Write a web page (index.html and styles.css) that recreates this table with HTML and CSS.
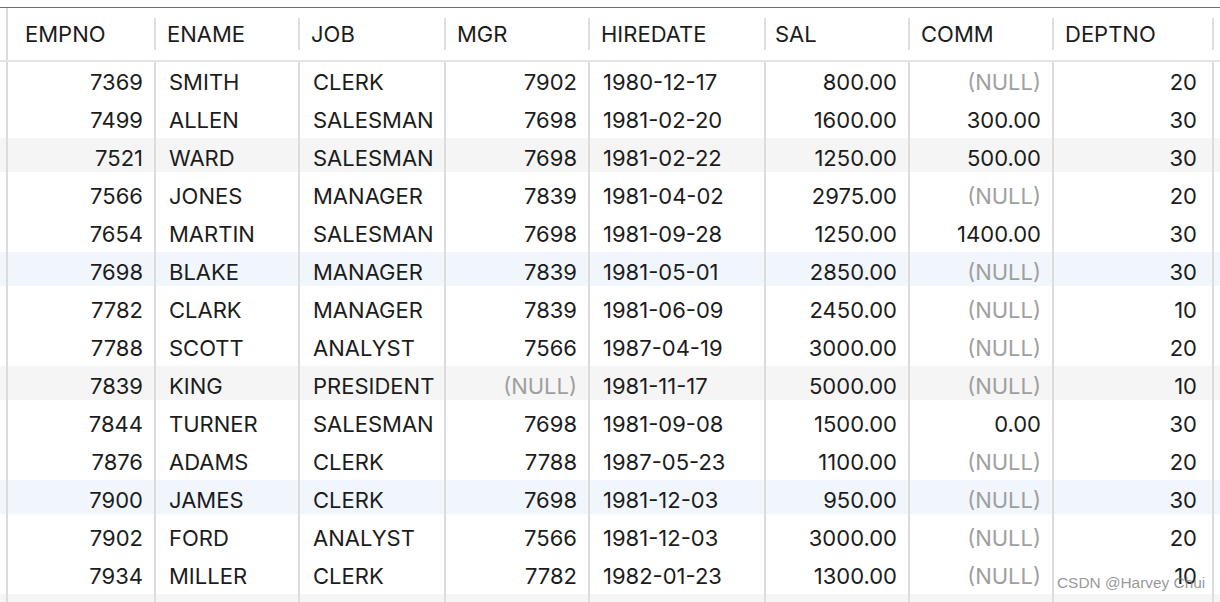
FILE: index.html
```html
<!DOCTYPE html>
<html>
<head>
<meta charset="utf-8">
<link rel="stylesheet" href="styles.css">
</head>
<body>
<div class="topbar"></div>
<div class="grid">
  <div class="row head">
    <div class="pad"></div>
    <div class="hc first">EMPNO</div>
    <div class="hc">ENAME</div>
    <div class="hc">JOB</div>
    <div class="hc">MGR</div>
    <div class="hc">HIREDATE</div>
    <div class="hc sal">SAL</div>
    <div class="hc">COMM</div>
    <div class="hc">DEPTNO</div>
    <div class="hc fill"></div>
  </div>
  <div class="row"><div class="pad"></div><div class="c r">7369</div><div class="c">SMITH</div><div class="c">CLERK</div><div class="c r">7902</div><div class="c">1980-12-17</div><div class="c r">800.00</div><div class="c r null">(NULL)</div><div class="c r last">20</div><div class="c fill"></div></div>
  <div class="row"><div class="pad"></div><div class="c r">7499</div><div class="c">ALLEN</div><div class="c">SALESMAN</div><div class="c r">7698</div><div class="c">1981-02-20</div><div class="c r">1600.00</div><div class="c r">300.00</div><div class="c r last">30</div><div class="c fill"></div></div>
  <div class="row gray"><div class="pad"></div><div class="c r">7521</div><div class="c">WARD</div><div class="c">SALESMAN</div><div class="c r">7698</div><div class="c">1981-02-22</div><div class="c r">1250.00</div><div class="c r">500.00</div><div class="c r last">30</div><div class="c fill"></div></div>
  <div class="row"><div class="pad"></div><div class="c r">7566</div><div class="c">JONES</div><div class="c">MANAGER</div><div class="c r">7839</div><div class="c">1981-04-02</div><div class="c r">2975.00</div><div class="c r null">(NULL)</div><div class="c r last">20</div><div class="c fill"></div></div>
  <div class="row"><div class="pad"></div><div class="c r">7654</div><div class="c">MARTIN</div><div class="c">SALESMAN</div><div class="c r">7698</div><div class="c">1981-09-28</div><div class="c r">1250.00</div><div class="c r">1400.00</div><div class="c r last">30</div><div class="c fill"></div></div>
  <div class="row blue"><div class="pad"></div><div class="c r">7698</div><div class="c">BLAKE</div><div class="c">MANAGER</div><div class="c r">7839</div><div class="c">1981-05-01</div><div class="c r">2850.00</div><div class="c r null">(NULL)</div><div class="c r last">30</div><div class="c fill"></div></div>
  <div class="row"><div class="pad"></div><div class="c r">7782</div><div class="c">CLARK</div><div class="c">MANAGER</div><div class="c r">7839</div><div class="c">1981-06-09</div><div class="c r">2450.00</div><div class="c r null">(NULL)</div><div class="c r last">10</div><div class="c fill"></div></div>
  <div class="row"><div class="pad"></div><div class="c r">7788</div><div class="c">SCOTT</div><div class="c">ANALYST</div><div class="c r">7566</div><div class="c">1987-04-19</div><div class="c r">3000.00</div><div class="c r null">(NULL)</div><div class="c r last">20</div><div class="c fill"></div></div>
  <div class="row gray"><div class="pad"></div><div class="c r">7839</div><div class="c">KING</div><div class="c">PRESIDENT</div><div class="c r null">(NULL)</div><div class="c">1981-11-17</div><div class="c r">5000.00</div><div class="c r null">(NULL)</div><div class="c r last">10</div><div class="c fill"></div></div>
  <div class="row"><div class="pad"></div><div class="c r">7844</div><div class="c">TURNER</div><div class="c">SALESMAN</div><div class="c r">7698</div><div class="c">1981-09-08</div><div class="c r">1500.00</div><div class="c r">0.00</div><div class="c r last">30</div><div class="c fill"></div></div>
  <div class="row"><div class="pad"></div><div class="c r">7876</div><div class="c">ADAMS</div><div class="c">CLERK</div><div class="c r">7788</div><div class="c">1987-05-23</div><div class="c r">1100.00</div><div class="c r null">(NULL)</div><div class="c r last">20</div><div class="c fill"></div></div>
  <div class="row blue"><div class="pad"></div><div class="c r">7900</div><div class="c">JAMES</div><div class="c">CLERK</div><div class="c r">7698</div><div class="c">1981-12-03</div><div class="c r">950.00</div><div class="c r null">(NULL)</div><div class="c r last">30</div><div class="c fill"></div></div>
  <div class="row"><div class="pad"></div><div class="c r">7902</div><div class="c">FORD</div><div class="c">ANALYST</div><div class="c r">7566</div><div class="c">1981-12-03</div><div class="c r">3000.00</div><div class="c r null">(NULL)</div><div class="c r last">20</div><div class="c fill"></div></div>
  <div class="row"><div class="pad"></div><div class="c r">7934</div><div class="c">MILLER</div><div class="c">CLERK</div><div class="c r">7782</div><div class="c">1982-01-23</div><div class="c r">1300.00</div><div class="c r null">(NULL)</div><div class="c r last">10</div><div class="c fill"></div></div>
  <div class="row gray"><div class="pad"></div><div class="c r"></div><div class="c"></div><div class="c"></div><div class="c r"></div><div class="c"></div><div class="c r"></div><div class="c r"></div><div class="c r last"></div><div class="c fill"></div></div>
</div>
<div class="watermark">CSDN @Harvey Chui</div>
</body>
</html>
```

FILE: styles.css
```css
html, body {
  margin: 0;
  padding: 0;
  width: 1220px;
  height: 602px;
  overflow: hidden;
  background: #ffffff;
}
body {
  position: relative;
  font-family: "Inter", "Liberation Sans", sans-serif;
  font-size: 22px;
  color: #1c1c1c;
}
.topbar {
  height: 7px;
  border-bottom: 1px solid #707070;
}
.row {
  display: grid;
  grid-template-columns: 6px 148px 144px 146px 144px 176px 144px 144px 160px 1fr;
  height: 38px;
}
.row.gray {
  background: linear-gradient(to bottom, #f5f5f5 0, #f5f5f5 34px, transparent 34px);
}
.row.blue {
  background: linear-gradient(to bottom, #f1f6fd 0, #f1f6fd 34px, transparent 34px);
}
.row.head {
  height: 52px;
  border-bottom: 2px solid #e3e3e3;
}
.hc {
  position: relative;
  line-height: 52px;
  padding-left: 13px;
  white-space: nowrap;
}
.hc::before {
  content: "";
  position: absolute;
  left: 0;
  top: 10px;
  height: 32px;
  width: 2px;
  background: #dedede;
}
.hc.first {
  border-left: 2px solid #dcdcdc;
  padding-left: 17px;
}
.hc.first::before { display: none; }
.hc.sal { padding-left: 11px; }
.c {
  border-left: 2px solid #dcdcdc;
  line-height: 36px;
  padding-top: 2px;
  padding-left: 13px;
  padding-right: 11px;
  white-space: nowrap;
  overflow: hidden;
}
.c.r { text-align: right; }
.c.last { padding-right: 15px; }
.c.null { color: #9f9f9f; }
.c.fill { padding: 0; }
.watermark {
  position: absolute;
  left: 1057px;
  top: 574px;
  font-family: "Liberation Sans", Arial, sans-serif;
  font-size: 15.4px;
  color: rgba(125, 125, 125, 0.8);
  white-space: nowrap;
}
```
